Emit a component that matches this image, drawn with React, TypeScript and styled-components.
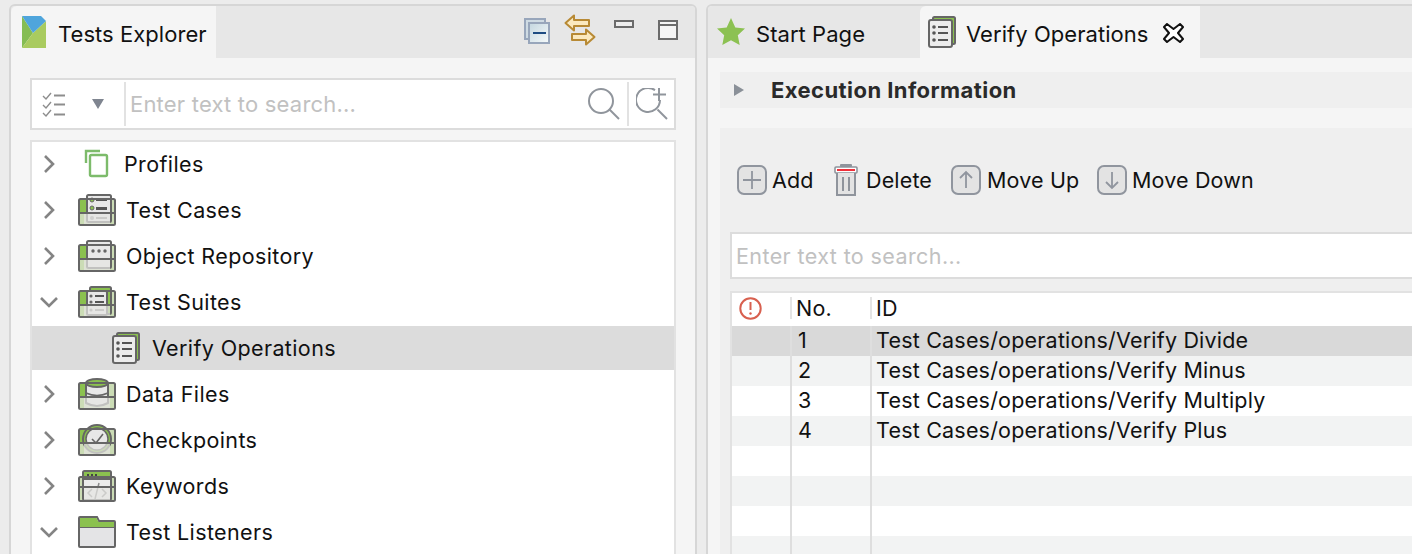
import React from "react";
import styled, { createGlobalStyle } from "styled-components";

const GlobalStyle = createGlobalStyle`
  html, body {
    margin: 0;
    padding: 0;
    background: #ececec;
    overflow: hidden;
  }
  * { box-sizing: border-box; }
`;

const Page = styled.div`
  width: 1412px;
  height: 554px;
  overflow: hidden;
  display: flex;
  gap: 9px;
  padding: 4px 0 0 9px;
  font-family: Inter, "Liberation Sans", sans-serif;
  color: #111;
`;

const Panel = styled.div<{ $width: number }>`
  flex: none;
  width: ${(p) => p.$width}px;
  height: 600px;
  border: 2px solid #d6d6d6;
  border-radius: 6px 6px 0 0;
  background: #f5f5f5;
  overflow: hidden;
`;

const TabBar = styled.div`
  height: 52px;
  background: #e7e7e7;
  display: flex;
  align-items: stretch;
`;

const Tab = styled.div<{ $active?: boolean; $width: number; $pad: number; $gap: number }>`
  flex: none;
  width: ${(p) => p.$width}px;
  padding-left: ${(p) => p.$pad}px;
  display: flex;
  align-items: center;
  gap: ${(p) => p.$gap}px;
  font-size: 22px;
  background: ${(p) => (p.$active ? "#f5f5f5" : "transparent")};
  border-radius: ${(p) => (p.$active ? "6px 0 0 0" : "0")};
  white-space: nowrap;
`;

const TabLabel = styled.span`
  padding-top: 4px;
  letter-spacing: 0.05px;
`;

const TabClose = styled.span`
  display: flex;
  margin-left: 5px;
  padding-top: 2px;
`;

const ViewActions = styled.div`
  margin-left: auto;
  display: flex;
  align-items: flex-start;
  padding: 8px 17px 0 0;
  gap: 0;
`;

const ActionSlot = styled.span<{ $width: number; $top: number }>`
  flex: none;
  width: ${(p) => p.$width}px;
  margin-top: ${(p) => p.$top}px;
  display: flex;
`;

const LeftBody = styled.div`
  padding: 20px 19px 0 19px;
`;

const SearchBox = styled.div`
  height: 52px;
  border: 2px solid #dcdcdc;
  background: #fff;
  display: flex;
  align-items: center;
`;

const FilterButton = styled.div`
  flex: none;
  width: 94px;
  height: 44px;
  padding-left: 10px;
  display: flex;
  align-items: center;
  gap: 26px;
  border-right: 2px solid #e2e2e2;
`;

const Placeholder = styled.div<{ $pad: number; $spacing: number; $size: number }>`
  flex: 1;
  padding-left: ${(p) => p.$pad}px;
  font-size: ${(p) => p.$size}px;
  letter-spacing: ${(p) => p.$spacing}px;
  color: #c1c1c1;
  white-space: nowrap;
  overflow: hidden;
`;

const SearchActions = styled.div`
  flex: none;
  height: 44px;
  display: flex;
  align-items: center;
  gap: 7px;
  padding-right: 6px;
`;

const SearchDivider = styled.span`
  width: 2px;
  height: 44px;
  background: #e2e2e2;
`;

const Tree = styled.div`
  margin-top: 10px;
  border: 2px solid #e2e2e2;
  background: #fff;
`;

const TreeRow = styled.div<{ $selected?: boolean }>`
  height: ${(p) => (p.$selected ? 44 : 46)}px;
  margin-bottom: ${(p) => (p.$selected ? 2 : 0)}px;
  padding-bottom: ${(p) => (p.$selected ? 0 : 2)}px;
  display: flex;
  align-items: center;
  background: ${(p) => (p.$selected ? "#dcdcdc" : "transparent")};
  font-size: 21.5px;
  letter-spacing: 0.38px;
  white-space: nowrap;
`;

const ChevronSlot = styled.span<{ $width: number }>`
  flex: none;
  width: ${(p) => p.$width}px;
  padding-left: 7px;
  display: flex;
`;

const TreeLabel = styled.span<{ $gap: number }>`
  margin-left: ${(p) => p.$gap}px;
`;

const EditorBody = styled.div`
  padding: 14px 0 0 12px;
`;

const SectionHeader = styled.div`
  height: 36px;
  background: #efefef;
  display: flex;
  align-items: center;
  padding-left: 14px;
  gap: 27px;
  font-size: 22px;
  font-weight: 700;
  letter-spacing: 0.43px;
  color: #2a2a2a;
`;

const SectionContent = styled.div`
  margin-top: 20px;
  height: 500px;
  background: #efefef;
  padding: 35px 0 0 10px;
`;

const Toolbar = styled.div`
  height: 34px;
  display: flex;
  align-items: center;
  font-size: 21.5px;
  letter-spacing: 0.15px;
`;

const ToolButton = styled.div<{ $width: number; $gap: number }>`
  flex: none;
  width: ${(p) => p.$width}px;
  padding-left: 7px;
  display: flex;
  align-items: center;
  gap: ${(p) => p.$gap}px;
  white-space: nowrap;
`;

const TableSearch = styled.div`
  margin-top: 35px;
  height: 47px;
  border: 2px solid #dcdcdc;
  background: #fff;
  display: flex;
  align-items: center;
`;

const Table = styled.div`
  margin-top: 12px;
  border-left: 2px solid #e2e2e2;
  border-top: 2px solid #e2e2e2;
  background: #fff;
  font-size: 21.5px;
  letter-spacing: 0.2px;
`;

const HeaderRow = styled.div`
  height: 33px;
  display: grid;
  grid-template-columns: 58px 80px 1fr;
  align-items: center;
  background: #fff;
`;

const HeaderCell = styled.div<{ $divided?: boolean }>`
  height: 22px;
  line-height: 22px;
  padding-left: ${(p) => (p.$divided ? 4 : 7)}px;
  border-left: ${(p) => (p.$divided ? "2px solid #e4e4e4" : "none")};
  display: flex;
  align-items: center;
  margin-top: -3px;
`;

const BodyRow = styled.div<{ $tone: "selected" | "alt" | "plain" }>`
  height: 30px;
  display: grid;
  grid-template-columns: 58px 80px 1fr;
  background: ${(p) =>
    p.$tone === "selected" ? "#d9d9d9" : p.$tone === "alt" ? "#f2f3f3" : "#fff"};
`;

const BodyCell = styled.div<{ $divided?: boolean; $pad?: number }>`
  padding-left: ${(p) => p.$pad ?? 0}px;
  border-left: ${(p) => (p.$divided ? "2px solid #dedede" : "none")};
  line-height: 28px;
  white-space: nowrap;
`;

const Logo = () => (
  <svg width="24" height="32" viewBox="0 0 24 32">
    <polygon points="0,0 0,32 11,17" fill="#85bd52" />
    <polygon points="24,5 24,32 0,32 11,17" fill="#a9cb5f" />
    <polygon points="0,0 19,0 24,5 11,17" fill="#4fa5dc" />
  </svg>
);

const CollapseIcon = () => (
  <svg width="26" height="26" viewBox="0 0 26 26">
    <defs>
      <linearGradient id="collapseFill" x1="0" y1="0" x2="1" y2="1">
        <stop offset="0" stopColor="#c3d6df" />
        <stop offset="1" stopColor="#f6fafa" />
      </linearGradient>
    </defs>
    <rect x="1" y="1" width="20" height="20" fill="#cfdbe3" stroke="#98a6bb" strokeWidth="2" />
    <rect x="5" y="5" width="20" height="20" fill="url(#collapseFill)" stroke="#98a6bb" strokeWidth="2" />
    <line x1="9" y1="15" x2="22" y2="15" stroke="#1d4c82" strokeWidth="2" />
  </svg>
);

const SyncIcon = () => (
  <svg width="32" height="32" viewBox="0 0 32 32">
    <path
      d="M1.5 9 L10 1.5 V6 H25 V12 H10 V16.5 Z"
      fill="#fbe9bf"
      stroke="#b88a35"
      strokeWidth="2"
      strokeLinejoin="round"
    />
    <path
      d="M30.5 23 L22 15.5 V20 H8 V26 H22 V30.5 Z"
      fill="#fbe9bf"
      stroke="#b88a35"
      strokeWidth="2"
      strokeLinejoin="round"
    />
  </svg>
);

const MinimizeIcon = () => (
  <svg width="20" height="8" viewBox="0 0 20 8">
    <rect x="1" y="1" width="18" height="6" fill="#eee" stroke="#6b6b6b" strokeWidth="2" />
  </svg>
);

const MaximizeIcon = () => (
  <svg width="20" height="20" viewBox="0 0 20 20">
    <rect x="1" y="1" width="18" height="18" fill="#f4f4f4" stroke="#6b6b6b" strokeWidth="2" />
    <line x1="1" y1="5" x2="19" y2="5" stroke="#6b6b6b" strokeWidth="2" />
  </svg>
);

const CheckListIcon = () => (
  <svg width="24" height="26" viewBox="0 0 24 26" fill="none" stroke="#8d8d8d" strokeWidth="1.4">
    <path d="M1 5 L4 8 L9 2" />
    <path d="M12 4.5 H23" strokeWidth="2" />
    <path d="M1 14 L4 17 L9 11" />
    <path d="M12 13.5 H23" strokeWidth="2" />
    <path d="M1 22 L4 25 L9 19" />
    <path d="M12 23.5 H23" strokeWidth="2" />
  </svg>
);

const DropTriangle = () => (
  <svg width="12" height="10" viewBox="0 0 12 10">
    <polygon points="0,0 12,0 6,10" fill="#7f8590" />
  </svg>
);

const SearchIcon = ({ plus }: { plus?: boolean }) => (
  <svg width="32" height="32" viewBox="0 0 32 32" fill="none" stroke="#90959c" strokeWidth="2">
    {plus ? (
      <path d="M19 2.2 A12 12 0 1 0 24 12" />
    ) : (
      <circle cx="13" cy="13" r="12" />
    )}
    <path d="M21.5 21.5 L31 31" />
    {plus && <path d="M23 0 V13 M17 6.5 H30" />}
  </svg>
);

const Chevron = ({ open }: { open?: boolean }) => (
  <svg width="20" height="20" viewBox="0 0 20 20" fill="none" stroke="#848484" strokeWidth="2.6">
    {open ? <path d="M2 6 L10 14 L18 6" /> : <path d="M6 2 L14 10 L6 18" />}
  </svg>
);

// shared tray used by the top level folders of the tree
const Tray = ({ children }: { children?: React.ReactNode }) => (
  <svg width="38" height="32" viewBox="0 0 38 32">
    <rect x="1" y="5" width="36" height="26" rx="1.5" fill="#cbdcb5" />
    <rect x="2" y="6" width="7" height="13" fill="#8bc14f" />
    {children}
    <rect x="6" y="20" width="26" height="10" fill="#e4e4e2" opacity="0.72" />
    <line x1="1" y1="19" x2="37" y2="19" stroke="#666" strokeWidth="2" />
    <rect x="1" y="5" width="36" height="26" rx="1.5" fill="none" stroke="#666" strokeWidth="2" />
  </svg>
);

const Card = ({ x = 9, y = 1, w = 24, h = 27 }: { x?: number; y?: number; w?: number; h?: number }) => (
  <rect x={x} y={y} width={w} height={h} rx="1.5" fill="#e8e8e8" stroke="#666" strokeWidth="2" />
);

const TestCasesIcon = () => (
  <Tray>
    <Card />
    <circle cx="14" cy="6" r="2" fill="#8bc14f" stroke="#666" />
    <rect x="18" y="5" width="11" height="2" fill="#555" />
    <circle cx="14" cy="14" r="2" fill="#8bc14f" stroke="#666" />
    <rect x="18" y="13" width="11" height="3" fill="#555" />
    <circle cx="14" cy="24" r="2" fill="#999" />
    <rect x="18" y="23" width="11" height="2" fill="#888" />
  </Tray>
);

const ObjectRepoIcon = () => (
  <Tray>
    <Card />
    <circle cx="15" cy="11" r="1.7" fill="#666" />
    <circle cx="21" cy="11" r="1.7" fill="#666" />
    <circle cx="27" cy="11" r="1.7" fill="#666" />
  </Tray>
);

const TestSuitesIcon = () => (
  <Tray>
    <rect x="12" y="1" width="21" height="27" rx="1.5" fill="#8bc14f" stroke="#666" strokeWidth="2" />
    <Card x={9} y={5} w={20} h={24} />
    <circle cx="13" cy="10" r="1.6" fill="#666" />
    <rect x="17" y="9" width="9" height="2" fill="#555" />
    <circle cx="13" cy="16" r="1.6" fill="#666" />
    <rect x="17" y="15" width="9" height="2" fill="#555" />
    <circle cx="13" cy="24" r="1.6" fill="#888" />
    <rect x="17" y="23" width="9" height="2" fill="#888" />
  </Tray>
);

const SuiteIcon = () => (
  <svg width="28" height="32" viewBox="0 0 28 32">
    <rect x="5" y="1" width="22" height="27" rx="1.5" fill="#8bc14f" stroke="#666" strokeWidth="2" />
    <rect x="1" y="4" width="23" height="27" rx="2" fill="#ececec" stroke="#666" strokeWidth="2" />
    <circle cx="6" cy="11" r="1.8" fill="#555" />
    <rect x="10" y="10" width="10" height="2" fill="#555" />
    <circle cx="6" cy="17" r="1.8" fill="#555" />
    <rect x="10" y="16" width="10" height="2" fill="#555" />
    <circle cx="6" cy="24" r="1.8" fill="#555" />
    <rect x="10" y="23" width="10" height="2" fill="#555" />
  </svg>
);

const DataFilesIcon = () => (
  <Tray>
    <path d="M8 5 V25 Q19 31 30 25 V5" fill="#e8e8e8" stroke="#666" strokeWidth="2" />
    <ellipse cx="19" cy="5" rx="11" ry="4" fill="#8bc14f" stroke="#666" strokeWidth="2" />
    <path d="M8 15 Q19 20 30 15" fill="none" stroke="#666" strokeWidth="1.5" />
  </Tray>
);

const CheckpointsIcon = () => (
  <Tray>
    <circle cx="19" cy="15" r="14" fill="#8bc14f" stroke="#666" strokeWidth="2" />
    <circle cx="19" cy="15" r="11" fill="#e8e8e8" stroke="#666" strokeWidth="1.5" />
    <path d="M14 15 L18 19 L25 10" fill="none" stroke="#666" strokeWidth="1.6" />
  </Tray>
);

const KeywordsIcon = () => (
  <svg width="38" height="32" viewBox="0 0 38 32">
    <rect x="1" y="7" width="36" height="24" rx="1.5" fill="#cbdcb5" />
    <rect x="5" y="1" width="28" height="29" rx="1.5" fill="#ececec" stroke="#666" strokeWidth="2" />
    <rect x="6" y="2" width="26" height="7" fill="#8bc14f" />
    <rect x="9" y="4" width="2" height="2" fill="#444" />
    <rect x="13" y="4" width="2" height="2" fill="#444" />
    <rect x="17" y="4" width="2" height="2" fill="#444" />
    <line x1="5" y1="9" x2="33" y2="9" stroke="#666" strokeWidth="2" />
    <path d="M14 19 L10 23 L14 27 M24 19 L28 23 L24 27 M21 13 L17 29" fill="none" stroke="#8a8a8a" strokeWidth="1.5" />
    <rect x="6" y="18" width="26" height="12" fill="#e4e4e2" opacity="0.72" />
    <line x1="1" y1="17" x2="37" y2="17" stroke="#666" strokeWidth="2" />
    <rect x="1" y="7" width="36" height="24" rx="1.5" fill="none" stroke="#666" strokeWidth="2" />
  </svg>
);

const ListenersIcon = () => (
  <svg width="38" height="32" viewBox="0 0 38 32">
    <path d="M1 2 Q1 1 2 1 H19 L21 5 H36 Q37 5 37 6 V30 Q37 31 36 31 H2 Q1 31 1 30 Z" fill="#e4e4e6" stroke="#666" strokeWidth="2" />
    <path d="M2 2 H18.5 L20.5 6 H36 V11 H2 Z" fill="#8bc14f" />
    <line x1="2" y1="11.5" x2="36" y2="11.5" stroke="#666" strokeWidth="1" />
  </svg>
);

const ProfilesIcon = () => (
  <svg width="38" height="32" viewBox="0 0 38 32" fill="none" stroke="#7dbb6b" strokeWidth="2.4">
    <path d="M8 15 V3 H22" />
    <rect x="12" y="7" width="17" height="21" rx="1.5" />
  </svg>
);

const StarIcon = () => (
  <svg width="28" height="28" viewBox="0 0 28 28">
    <polygon
      points="14,0 18.3,9.4 28,10.6 20.8,17.3 22.7,27 14,22.2 5.3,27 7.2,17.3 0,10.6 9.7,9.4"
      fill="#8cc152"
    />
  </svg>
);

const CloseIcon = () => (
  <svg width="21" height="20" viewBox="0 0 21 20">
    <polygon
      points="4,1 10.5,6 17,1 20,4 15,10 20,16 17,19 10.5,14 4,19 1,16 6,10 1,4"
      fill="#fff"
      stroke="#111"
      strokeWidth="2"
      strokeLinejoin="round"
    />
  </svg>
);

const SectionTriangle = () => (
  <svg width="10" height="12" viewBox="0 0 10 12">
    <polygon points="0,0 10,6 0,12" fill="#8a9098" />
  </svg>
);

const RoundButtonIcon = ({ d }: { d: string }) => (
  <svg width="30" height="30" viewBox="0 0 30 30" fill="none">
    <rect x="1" y="1" width="28" height="28" rx="6" fill="#e3e3e3" stroke="#90959e" strokeWidth="2" />
    <path d={d} stroke="#90959e" strokeWidth="1.8" />
  </svg>
);

const TrashIcon = () => (
  <svg width="24" height="32" viewBox="0 0 24 32" fill="none">
    <rect x="6" y="0" width="12" height="3" rx="1" fill="#8f949c" />
    <rect x="1" y="3" width="22" height="6" rx="1" fill="#fff" stroke="#8f949c" strokeWidth="1.6" />
    <rect x="3" y="5" width="18" height="2" fill="#f0303a" />
    <path d="M3 9 V31 H21 V9" fill="#e3e3e3" stroke="#8f949c" strokeWidth="2" />
    <path d="M9 13 V27 M15 13 V27" stroke="#8f949c" strokeWidth="2" />
  </svg>
);

const AlertIcon = () => (
  <svg width="23" height="23" viewBox="0 0 23 23" fill="none">
    <circle cx="11.5" cy="11.5" r="10.2" stroke="#d8604f" strokeWidth="2" />
    <path d="M11.5 5 V13" stroke="#d8604f" strokeWidth="2" />
    <circle cx="11.5" cy="16.5" r="1.2" fill="#d8604f" />
  </svg>
);

const treeItems = [
  { label: "Profiles", icon: <ProfilesIcon />, gap: 8 },
  { label: "Test Cases", icon: <TestCasesIcon />, gap: 10 },
  { label: "Object Repository", icon: <ObjectRepoIcon />, gap: 10 },
  { label: "Test Suites", icon: <TestSuitesIcon />, gap: 10, open: true },
  { label: "Verify Operations", icon: <SuiteIcon />, gap: 12, child: true },
  { label: "Data Files", icon: <DataFilesIcon />, gap: 10 },
  { label: "Checkpoints", icon: <CheckpointsIcon />, gap: 10 },
  { label: "Keywords", icon: <KeywordsIcon />, gap: 10 },
  { label: "Test Listeners", icon: <ListenersIcon />, gap: 10, open: true },
];

const tableRows = [
  { no: "1", id: "Test Cases/operations/Verify Divide" },
  { no: "2", id: "Test Cases/operations/Verify Minus" },
  { no: "3", id: "Test Cases/operations/Verify Multiply" },
  { no: "4", id: "Test Cases/operations/Verify Plus" },
  { no: "", id: "" },
  { no: "", id: "" },
  { no: "", id: "" },
  { no: "", id: "" },
];

export default function App() {
  return (
    <Page>
      <GlobalStyle />
      <Panel $width={688}>
        <TabBar>
          <Tab $active $width={205} $pad={11} $gap={12}>
            <Logo />
            <TabLabel>Tests Explorer</TabLabel>
          </Tab>
          <ViewActions>
            <ActionSlot $width={40} $top={4}>
              <CollapseIcon />
            </ActionSlot>
            <ActionSlot $width={50} $top={0}>
              <SyncIcon />
            </ActionSlot>
            <ActionSlot $width={44} $top={6}>
              <MinimizeIcon />
            </ActionSlot>
            <ActionSlot $width={20} $top={6}>
              <MaximizeIcon />
            </ActionSlot>
          </ViewActions>
        </TabBar>
        <LeftBody>
          <SearchBox>
            <FilterButton>
              <CheckListIcon />
              <DropTriangle />
            </FilterButton>
            <Placeholder $pad={4} $size={22} $spacing={0.2}>
              Enter text to search...
            </Placeholder>
            <SearchActions>
              <SearchIcon />
              <SearchDivider />
              <SearchIcon plus />
            </SearchActions>
          </SearchBox>
          <Tree>
            {treeItems.map((item) => (
              <TreeRow key={item.label} $selected={item.child}>
                <ChevronSlot $width={item.child ? 80 : 46}>
                  {!item.child && <Chevron open={item.open} />}
                </ChevronSlot>
                {item.icon}
                <TreeLabel $gap={item.gap}>{item.label}</TreeLabel>
              </TreeRow>
            ))}
          </Tree>
        </LeftBody>
      </Panel>
      <Panel $width={760}>
        <TabBar>
          <Tab $width={212} $pad={9} $gap={11}>
            <StarIcon />
            <TabLabel>Start Page</TabLabel>
          </Tab>
          <Tab $active $width={280} $pad={8} $gap={10}>
            <SuiteIcon />
            <TabLabel>Verify Operations</TabLabel>
            <TabClose>
              <CloseIcon />
            </TabClose>
          </Tab>
        </TabBar>
        <EditorBody>
          <SectionHeader>
            <SectionTriangle />
            Execution Information
          </SectionHeader>
          <SectionContent>
            <Toolbar>
              <ToolButton $width={97} $gap={5}>
                <RoundButtonIcon d="M15 6 V24 M6 15 H24" />
                Add
              </ToolButton>
              <ToolButton $width={117} $gap={8}>
                <TrashIcon />
                Delete
              </ToolButton>
              <ToolButton $width={146} $gap={6}>
                <RoundButtonIcon d="M15 23 V7 M9 13 L15 7 L21 13" />
                Move Up
              </ToolButton>
              <ToolButton $width={180} $gap={5}>
                <RoundButtonIcon d="M15 7 V23 M9 17 L15 23 L21 17" />
                Move Down
              </ToolButton>
            </Toolbar>
            <TableSearch>
              <Placeholder $pad={4} $size={21.5} $spacing={0.4}>
                Enter text to search...
              </Placeholder>
            </TableSearch>
            <Table>
              <HeaderRow>
                <HeaderCell>
                  <AlertIcon />
                </HeaderCell>
                <HeaderCell $divided>No.</HeaderCell>
                <HeaderCell $divided>ID</HeaderCell>
              </HeaderRow>
              {tableRows.map((row, index) => (
                <BodyRow
                  key={index}
                  $tone={index === 0 ? "selected" : index % 2 === 1 ? "alt" : "plain"}
                >
                  <BodyCell />
                  <BodyCell $divided $pad={6}>
                    {row.no}
                  </BodyCell>
                  <BodyCell $divided $pad={4}>
                    {row.id}
                  </BodyCell>
                </BodyRow>
              ))}
            </Table>
          </SectionContent>
        </EditorBody>
      </Panel>
    </Page>
  );
}
